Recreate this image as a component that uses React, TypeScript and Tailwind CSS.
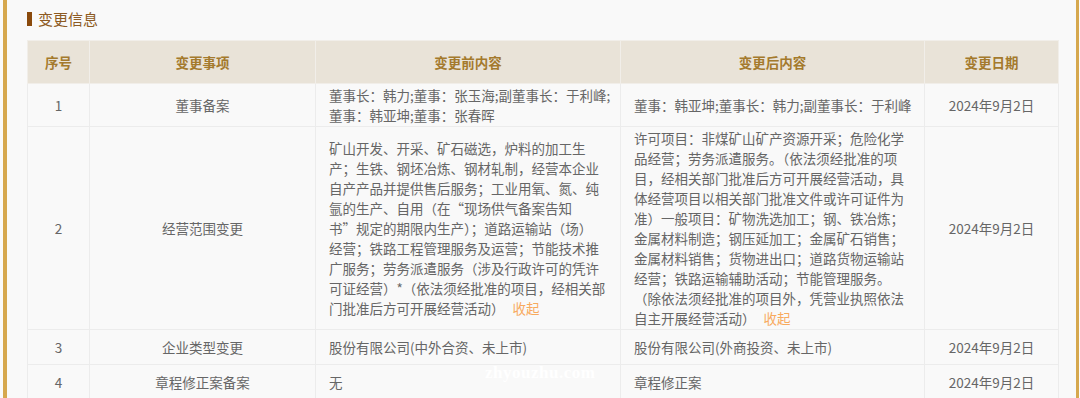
import React from "react";

const Fold = () => <span className="text-[#f8aa5e] ml-[8px]">收起</span>;

const Lines = ({ lines, fold }: { lines: string[]; fold?: boolean }) => (
  <>
    {lines.map((l, i) => (
      <div key={i} className="whitespace-nowrap">
        {l}
        {fold && i === lines.length - 1 ? <Fold /> : null}
      </div>
    ))}
  </>
);

const rows: { no: string; item: string; before: React.ReactNode; after: React.ReactNode; date: string }[] = [
  {
    no: "1",
    item: "董事备案",
    before: <Lines lines={["董事长：韩力;董事：张玉海;副董事长：于利峰;", "董事：韩亚坤;董事：张春晖"]} />,
    after: <Lines lines={["董事：韩亚坤;董事长：韩力;副董事长：于利峰"]} />,
    date: "2024年9月2日",
  },
  {
    no: "2",
    item: "经营范围变更",
    before: (
      <Lines
        fold
        lines={[
          "矿山开发、开采、矿石磁选，炉料的加工生",
          "产；生铁、钢坯冶炼、钢材轧制，经营本企业",
          "自产产品并提供售后服务；工业用氧、氮、纯",
          "氩的生产、自用（在“现场供气备案告知",
          "书”规定的期限内生产）；道路运输站（场）",
          "经营；铁路工程管理服务及运营；节能技术推",
          "广服务；劳务派遣服务（涉及行政许可的凭许",
          "可证经营）*（依法须经批准的项目，经相关部",
          "门批准后方可开展经营活动）",
        ]}
      />
    ),
    after: (
      <Lines
        fold
        lines={[
          "许可项目：非煤矿山矿产资源开采；危险化学",
          "品经营；劳务派遣服务。（依法须经批准的项",
          "目，经相关部门批准后方可开展经营活动，具",
          "体经营项目以相关部门批准文件或许可证件为",
          "准）一般项目：矿物洗选加工；钢、铁冶炼；",
          "金属材料制造；钢压延加工；金属矿石销售；",
          "金属材料销售；货物进出口；道路货物运输站",
          "经营；铁路运输辅助活动；节能管理服务。",
          "（除依法须经批准的项目外，凭营业执照依法",
          "自主开展经营活动）",
        ]}
      />
    ),
    date: "2024年9月2日",
  },
  {
    no: "3",
    item: "企业类型变更",
    before: "股份有限公司(中外合资、未上市)",
    after: "股份有限公司(外商投资、未上市)",
    date: "2024年9月2日",
  },
  {
    no: "4",
    item: "章程修正案备案",
    before: "无",
    after: "章程修正案",
    date: "2024年9月2日",
  },
];

export default function App() {
  return (
    <div
      className="w-[1080px] h-[398px] bg-[#fafafa] overflow-hidden relative"
      style={{ fontFamily: '"Noto Sans CJK SC", "Noto Sans", sans-serif' }}
    >
      <div className="ml-[3px] mr-[1px] h-full border-l-[4px] border-r-[3px] border-[#d6a84e] bg-[#f9f9f9] pl-[20px] pr-[19px]">
        <div className="h-[40px] pt-[12px] flex items-start">
          <div className="flex items-center h-[14px]">
            <span className="w-[5px] h-[14px] bg-[#8a4a0c] mr-[6px]" />
            <span className="text-[15px] leading-[14px] text-[#8d5a22]">变更信息</span>
          </div>
        </div>
        <table className="border-collapse table-fixed w-[1031px] text-[13.5px] leading-[20px] text-[#666]">
          <colgroup>
            <col className="w-[62px]" />
            <col className="w-[226px]" />
            <col className="w-[305px]" />
            <col className="w-[304px]" />
            <col className="w-[134px]" />
          </colgroup>
          <thead>
            <tr className="bg-[#e9e3d8] h-[43px]">
              {["序号", "变更事项", "变更前内容", "变更后内容", "变更日期"].map((h) => (
                <th key={h} className="border border-[#f1eee9] font-bold text-[#a47a2d] text-center align-middle">
                  {h}
                </th>
              ))}
            </tr>
          </thead>
          <tbody>
            {rows.map((r) => (
              <tr key={r.no} className="h-[35px]">
                <td className="border border-[#ececec] text-center align-middle py-[1px]">{r.no}</td>
                <td className="border border-[#ececec] text-center align-middle py-[1px]">{r.item}</td>
                <td className="border border-[#ececec] align-middle py-[1px] pl-[13px] pr-[4px] overflow-hidden">{r.before}</td>
                <td className="border border-[#ececec] align-middle py-[1px] pl-[13px] pr-[4px] overflow-hidden">{r.after}</td>
                <td className="border border-[#ececec] text-center align-middle py-[1px]">{r.date}</td>
              </tr>
            ))}
          </tbody>
        </table>
      </div>
      <div
        className="absolute left-[485px] top-[362px] text-[17px] font-bold text-white leading-[22px] tracking-[0.5px]"
        style={{ fontFamily: '"Liberation Serif", "DejaVu Serif", serif' }}
      >
        zhyouzhu.com
      </div>
    </div>
  );
}
